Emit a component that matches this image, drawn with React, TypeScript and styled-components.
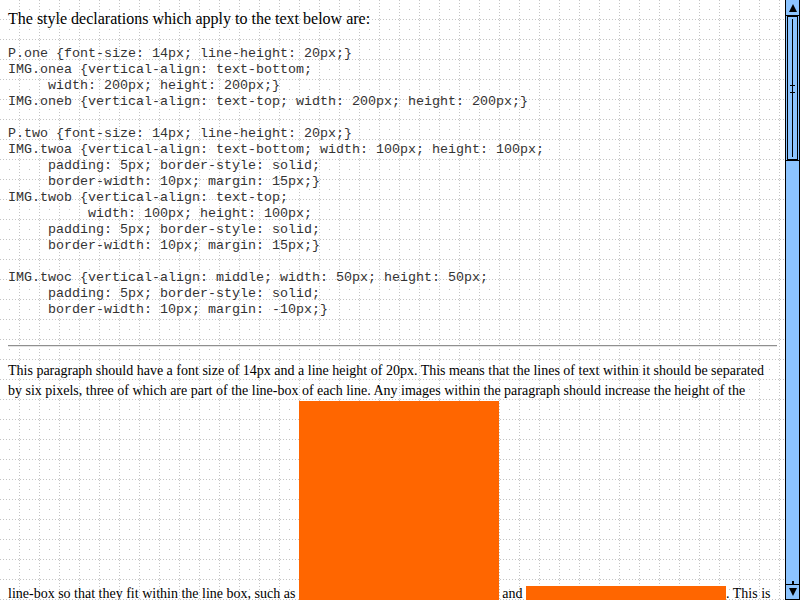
import React from "react";
import styled, { createGlobalStyle } from "styled-components";

const gridDots = (() => {
  const rects: string[] = [];
  for (let i = 0; i < 20; i += 3) {
    rects.push(`<rect x='19' y='${i}' width='1' height='1'/>`);
    rects.push(`<rect x='${i}' y='19' width='1' height='1'/>`);
  }
  rects.push(`<rect x='9' y='9' width='1' height='1'/>`);
  const svg = `<svg xmlns='http://www.w3.org/2000/svg' width='20' height='20'><g fill='#c4c4c4'>${rects.join("")}</g></svg>`;
  return `url("data:image/svg+xml;utf8,${encodeURIComponent(svg)}")`;
})();

const GlobalStyle = createGlobalStyle`
  html, body {
    margin: 0;
    padding: 0;
    overflow: hidden;
    background: #fff;
  }
`;

const Window = styled.div`
  display: flex;
  width: 100vw;
  height: 100vh;
  overflow: hidden;
`;

const Viewport = styled.main`
  flex: 1;
  min-width: 0;
  height: 100%;
  overflow: hidden;
  box-sizing: border-box;
  padding: 10px 8px 0 8px;
  background-color: #fff;
  background-image: ${gridDots};
  background-repeat: repeat;
  color: #000;
  font-family: "Liberation Serif", "Times New Roman", serif;
`;

const Intro = styled.p`
  margin: 0;
  font-size: 16px;
  line-height: 18px;
`;

const Code = styled.pre`
  margin: 18px 0 0;
  font-family: "Liberation Mono", "Courier New", monospace;
  font-size: 13.33px;
  line-height: 16px;
  color: #333;
`;

const Rule = styled.hr`
  margin: 27px 0 14px;
  height: 0;
  border: none;
  border-top: 1px solid #8f8f8f;
  border-bottom: 1px solid #e4e4e4;
`;

const TestParagraph = styled.p`
  margin: 0;
  font-size: 14px;
  line-height: 20px;
`;

const Word = styled.span`
  white-space: nowrap;
`;

const Swatch = styled.span<{ $align: "text-bottom" | "text-top" }>`
  display: inline-block;
  width: 200px;
  height: 200px;
  background: #ff6600;
  vertical-align: ${(p) => p.$align};
`;

const ScrollBar = styled.aside`
  flex: none;
  width: 15px;
  height: 100%;
  box-sizing: border-box;
  display: flex;
  flex-direction: column;
  background: #8cc4ff;
  border-left: 1px solid #000;
  border-right: 1px solid #000;
`;

const ArrowButton = styled.div<{ $down?: boolean }>`
  flex: none;
  height: 16px;
  box-sizing: border-box;
  display: flex;
  align-items: center;
  justify-content: center;
  border-top: ${(p) => (p.$down ? "1px solid #000" : "none")};
  border-bottom: 1px solid #000;

  &::after {
    content: "";
    width: 0;
    height: 0;
    border-left: 4px solid transparent;
    border-right: 4px solid transparent;
    ${(p) =>
      p.$down
        ? "border-top: 8px solid #000;"
        : "border-bottom: 8px solid #000;"}
  }
`;

const Thumb = styled.div`
  flex: none;
  height: 145px;
  box-sizing: border-box;
  border-bottom: 1px solid #000;
  display: flex;
`;

const Track = styled.div`
  flex: 1;
  display: flex;
  align-items: flex-end;
  justify-content: center;
`;

const Stub = styled.div`
  width: 2px;
  height: 3px;
  background: #000;
`;

const ThumbArt: React.FC = () => (
  <svg width="13" height="144" viewBox="0 0 13 144">
    <rect x="1.5" y="0.5" width="10" height="143" fill="none" stroke="#000" />
    <line x1="6.5" y1="3" x2="6.5" y2="141" stroke="#000" />
    <line x1="4" y1="69.5" x2="9" y2="69.5" stroke="#000" />
    <line x1="4" y1="76.5" x2="9" y2="76.5" stroke="#000" />
  </svg>
);

const App: React.FC = () => {
  return (
    <Window>
      <GlobalStyle />
      <Viewport>
        <Intro>The style declarations which apply to the text below are:</Intro>
        <Code>{`P.one {font-size: 14px; line-height: 20px;}
IMG.onea {vertical-align: text-bottom;
     width: 200px; height: 200px;}
IMG.oneb {vertical-align: text-top; width: 200px; height: 200px;}

P.two {font-size: 14px; line-height: 20px;}
IMG.twoa {vertical-align: text-bottom; width: 100px; height: 100px;
     padding: 5px; border-style: solid;
     border-width: 10px; margin: 15px;}
IMG.twob {vertical-align: text-top;
          width: 100px; height: 100px;
     padding: 5px; border-style: solid;
     border-width: 10px; margin: 15px;}

IMG.twoc {vertical-align: middle; width: 50px; height: 50px;
     padding: 5px; border-style: solid;
     border-width: 10px; margin: -10px;}`}</Code>
        <Rule />
        <TestParagraph>
          This paragraph should have a font size of 14px and a line height of
          20px. This means that the lines of text within it should be separated
          by six pixels, three of which are part of the <Word>line-box</Word> of
          each line. Any images within the paragraph should increase the height
          of the <Word>line-box</Word> so that they fit within the line box,
          such as <Swatch $align="text-bottom" /> and{" "}
          <Swatch $align="text-top" />. This is additional text to make sure
          that there is enough room left below the image so that this line does
          not hit the image that is text-top aligned.
        </TestParagraph>
      </Viewport>
      <ScrollBar>
        <ArrowButton />
        <Thumb>
          <ThumbArt />
        </Thumb>
        <Track>
          <Stub />
        </Track>
        <ArrowButton $down />
      </ScrollBar>
    </Window>
  );
};

export default App;
